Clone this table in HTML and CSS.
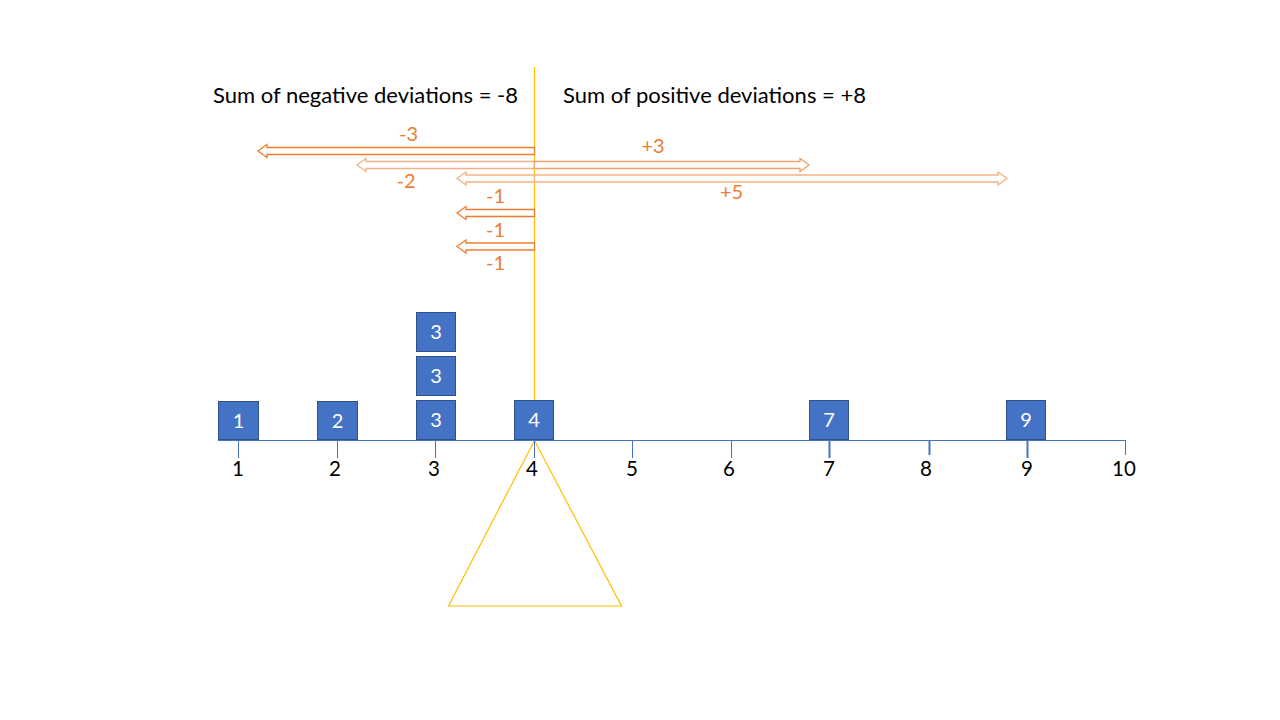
FILE: index.html
```html
<!DOCTYPE html>
<html lang="en">
<head>
<meta charset="utf-8">
<title>Sum of deviations balance</title>
<link rel="stylesheet" href="styles.css">
</head>
<body>
<div class="canvas">
<svg class="diagram" width="1280" height="720" viewBox="0 0 1280 720" xmlns="http://www.w3.org/2000/svg">
  <!-- fulcrum line -->
  <line class="fulcrum" x1="534.5" y1="67" x2="534.5" y2="440"/>
  <polygon class="fulcrum-tri" points="534.5,440.5 448.5,606 621.5,606"/>

  <!-- titles -->
  <text class="title" x="213" y="103" textLength="305" lengthAdjust="spacingAndGlyphs">Sum of negative deviations = -8</text>
  <text class="title" x="563" y="103" textLength="303" lengthAdjust="spacingAndGlyphs">Sum of positive deviations = +8</text>

  <!-- arrows -->
  <polygon class="arrow dark" points="534.5,147.5 267,147.5 267,144.5 258,151 267,157.5 267,154.5 534.5,154.5"/>
  <polygon class="arrow light" points="534.5,161.5 366,161.5 366,158.5 357,165 366,171.5 366,168.5 534.5,168.5"/>
  <polygon class="arrow mid" points="534.5,161.5 800,161.5 800,158.5 809,165 800,171.5 800,168.5 534.5,168.5"/>
  <polygon class="arrow light" points="534.5,175 466,175 466,172 457,178.5 466,185 466,182 534.5,182"/>
  <polygon class="arrow light" points="534.5,175 998,175 998,172 1007,178.5 998,185 998,182 534.5,182"/>
  <polygon class="arrow dark" points="534.5,209.5 466,209.5 466,206.5 457,213 466,219.5 466,216.5 534.5,216.5"/>
  <polygon class="arrow dark" points="534.5,243 466,243 466,240 457,246.5 466,253 466,250 534.5,250"/>

  <!-- arrow labels -->
  <text class="dev" x="408.5" y="141">-3</text>
  <text class="dev" x="653" y="153">+3</text>
  <text class="dev" x="406" y="188">-2</text>
  <text class="dev" x="731.5" y="199">+5</text>
  <text class="dev" x="495.5" y="203">-1</text>
  <text class="dev" x="495.5" y="237">-1</text>
  <text class="dev" x="495.5" y="270">-1</text>

  <!-- axis -->
  <line class="axis" x1="218" y1="440.5" x2="1125.5" y2="440.5"/>
  <g class="ticks">
    <line x1="238.5" y1="440" x2="238.5" y2="458"/>
    <line x1="337.5" y1="440" x2="337.5" y2="458"/>
    <line x1="435.5" y1="440" x2="435.5" y2="458"/>
    <line x1="534.5" y1="440" x2="534.5" y2="458"/>
    <line x1="632.5" y1="440" x2="632.5" y2="458"/>
    <line x1="731.5" y1="440" x2="731.5" y2="458"/>
    <line class="thick" x1="829.5" y1="440" x2="829.5" y2="458"/>
    <line class="thick" x1="929.5" y1="440" x2="929.5" y2="455"/>
    <line class="thick" x1="1027.5" y1="440" x2="1027.5" y2="458"/>
    <line x1="1125.5" y1="440" x2="1125.5" y2="455"/>
  </g>
  <g class="tick-labels">
    <text x="238" y="476">1</text>
    <text x="335" y="476">2</text>
    <text x="434" y="476">3</text>
    <text x="532" y="476">4</text>
    <text x="632" y="476">5</text>
    <text x="729" y="476">6</text>
    <text x="829" y="476">7</text>
    <text x="926" y="476">8</text>
    <text x="1027" y="476">9</text>
    <text x="1124" y="476">10</text>
  </g>

  <!-- data boxes -->
  <g class="boxes">
    <rect x="218.5" y="401.5" width="40" height="38"/>
    <rect x="317.5" y="401.5" width="40" height="38"/>
    <rect x="416.5" y="400.5" width="39" height="39"/>
    <rect x="416.5" y="356.5" width="39" height="39"/>
    <rect x="416.5" y="312.5" width="39" height="39"/>
    <rect x="514.5" y="400.5" width="39" height="39"/>
    <rect x="809.5" y="400.5" width="39" height="39"/>
    <rect x="1006.5" y="400.5" width="39" height="39"/>
  </g>
  <g class="box-labels">
    <text x="238.5" y="428">1</text>
    <text x="337.5" y="428">2</text>
    <text x="436" y="427">3</text>
    <text x="436" y="383">3</text>
    <text x="436" y="339">3</text>
    <text x="534" y="427">4</text>
    <text x="829" y="427">7</text>
    <text x="1026" y="427">9</text>
  </g>
</svg>
</div>
</body>
</html>
```

FILE: styles.css
```css
html, body {
  margin: 0;
  padding: 0;
  background: #ffffff;
}

.canvas {
  width: 1280px;
  height: 720px;
  position: relative;
  overflow: hidden;
  background: #ffffff;
}

.diagram {
  display: block;
  font-family: "Lato", "Open Sans", "Liberation Sans", sans-serif;
}

.fulcrum {
  stroke: #FFC000;
  stroke-width: 1.2;
}

.fulcrum-tri {
  fill: none;
  stroke: #FFC000;
  stroke-width: 1.2;
}

.title {
  font-size: 21.5px;
  fill: #000000;
}

.arrow {
  fill: #ffffff;
  stroke-width: 1.3;
}

.arrow.dark {
  stroke: #ED7D31;
}

.arrow.mid {
  stroke: #F1A06A;
}

.arrow.light {
  stroke: #F4B183;
}

.dev {
  font-size: 20px;
  fill: #ED7D31;
  text-anchor: middle;
}

.axis {
  stroke: #4472C4;
  stroke-width: 1;
}

.ticks line {
  stroke: #4472C4;
  stroke-width: 1;
}

.ticks line.thick {
  stroke-width: 2;
}

.tick-labels text {
  font-size: 20.5px;
  fill: #000000;
  text-anchor: middle;
}

.boxes rect {
  fill: #4472C4;
  stroke: #2F528F;
  stroke-width: 1;
}

.box-labels text {
  font-size: 20px;
  fill: #ffffff;
  text-anchor: middle;
}
```
